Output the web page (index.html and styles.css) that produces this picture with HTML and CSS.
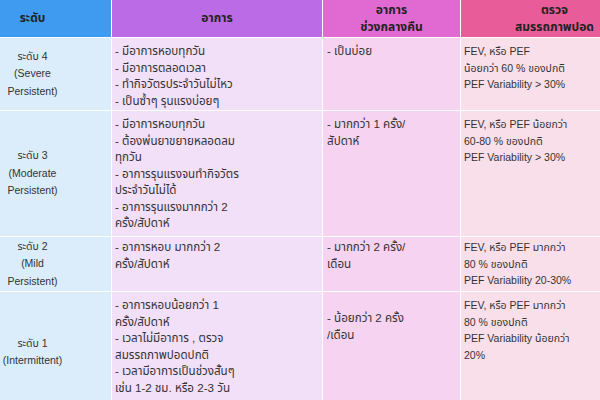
FILE: index.html
```html
<!DOCTYPE html>
<html lang="th">
<head>
<meta charset="utf-8">
<title>ระดับความรุนแรงของโรคหืด</title>
<link rel="stylesheet" href="styles.css">
</head>
<body>
<div class="table">
  <div class="cell head c1"><div class="ln">ระดับ</div></div>
  <div class="cell head c2"><div class="ln">อาการ</div></div>
  <div class="cell head c3"><div class="ln">อาการ</div><div class="ln">ช่วงกลางคืน</div></div>
  <div class="cell head c4"><div class="ln">ตรวจ</div><div class="ln">สมรรถภาพปอด</div></div>

  <div class="cell lv c1"><div class="ln">ระดับ 4</div><div class="ln">(Severe</div><div class="ln">Persistent)</div></div>
  <div class="cell c2"><div class="ln">- มีอาการหอบทุกวัน</div><div class="ln">- มีอาการตลอดเวลา</div><div class="ln">- ทำกิจวัตรประจำวันไม่ไหว</div><div class="ln">- เป็นซ้ำๆ รุนแรงบ่อยๆ</div></div>
  <div class="cell c3"><div class="ln">- เป็นบ่อย</div></div>
  <div class="cell c4"><div class="ln">FEV, หรือ PEF</div><div class="ln">น้อยกว่า 60 % ของปกติ</div><div class="ln">PEF Variability &gt; 30%</div></div>

  <div class="cell lv c1"><div class="ln">ระดับ 3</div><div class="ln">(Moderate</div><div class="ln">Persistent)</div></div>
  <div class="cell c2"><div class="ln">- มีอาการหอบทุกวัน</div><div class="ln">- ต้องพ่นยาขยายหลอดลม</div><div class="ln">ทุกวัน</div><div class="ln">- อาการรุนแรงจนทำกิจวัตร</div><div class="ln">ประจำวันไม่ได้</div><div class="ln">- อาการรุนแรงมากกว่า 2</div><div class="ln">ครั้ง/สัปดาห์</div></div>
  <div class="cell c3"><div class="ln">- มากกว่า 1 ครั้ง/</div><div class="ln">สัปดาห์</div></div>
  <div class="cell c4"><div class="ln">FEV, หรือ PEF น้อยกว่า</div><div class="ln">60-80 % ของปกติ</div><div class="ln">PEF Variability &gt; 30%</div></div>

  <div class="cell lv c1"><div class="ln">ระดับ 2</div><div class="ln">(Mild</div><div class="ln">Persistent)</div></div>
  <div class="cell c2 tight"><div class="ln">- อาการหอบ มากกว่า 2</div><div class="ln">ครั้ง/สัปดาห์</div></div>
  <div class="cell c3 tight"><div class="ln">- มากกว่า 2 ครั้ง/</div><div class="ln">เดือน</div></div>
  <div class="cell c4 tight"><div class="ln">FEV, หรือ PEF มากกว่า</div><div class="ln">80 % ของปกติ</div><div class="ln">PEF Variability 20-30%</div></div>

  <div class="cell lv c1"><div class="ln">ระดับ 1</div><div class="ln">(Intermittent)</div></div>
  <div class="cell c2"><div class="ln">- อาการหอบน้อยกว่า 1</div><div class="ln">ครั้ง/สัปดาห์</div><div class="ln">- เวลาไม่มีอาการ , ตรวจ</div><div class="ln">สมรรถภาพปอดปกติ</div><div class="ln">- เวลามีอาการเป็นช่วงสั้นๆ</div><div class="ln">เช่น 1-2 ชม. หรือ 2-3 วัน</div></div>
  <div class="cell c3 late"><div class="ln">- น้อยกว่า 2 ครั้ง</div><div class="ln">/เดือน</div></div>
  <div class="cell c4"><div class="ln">FEV, หรือ PEF มากกว่า</div><div class="ln">80 % ของปกติ</div><div class="ln">PEF Variability น้อยกว่า</div><div class="ln">20%</div></div>
</div>
</body>
</html>
```

FILE: styles.css
```css
html, body {
  margin: 0;
  padding: 0;
  background: #ffffff;
}
body {
  width: 600px;
  height: 400px;
  overflow: hidden;
  font-family: "Liberation Sans", "Noto Sans Thai", "Noto Sans Thai Looped", "Noto Sans", "DejaVu Sans", sans-serif;
  font-size: 10.5px;
  color: #333333;
}
.table {
  display: grid;
  grid-template-columns: 111px 210px 137px 139px;
  grid-template-rows: 37px 72px 125px 54px 120px;
  gap: 1px;
  background: #ffffff;
  width: 600px;
}
.cell {
  padding: 5px 4px 0 3px;
  line-height: 16.5px;
  overflow: hidden;
}
.c2, .c3 {
  font-size: 11.6px;
}
.c3 {
  padding-left: 4px;
}
.tight {
  padding-top: 2px;
}
.ln {
  white-space: nowrap;
}
.head {
  display: flex;
  flex-direction: column;
  justify-content: center;
  align-items: center;
  padding: 0;
  font-weight: bold;
  font-size: 12px;
  color: #222222;
  line-height: 17px;
}
.head.c1 { background: #3f9bf0; padding-right: 46px; }
.head.c2 { background: #bb6be6; }
.head.c3 { background: #e06ad2; padding: 0; }
.head.c4 { background: #e85d99; padding-left: 48px; }

.c1 { background: #dbedfb; }
.c2 { background: #f2dff8; }
.c3 { background: #f6d4f1; }
.c4 { background: #f9dfea; }

.lv {
  display: flex;
  flex-direction: column;
  justify-content: center;
  align-items: center;
  padding: 0 46px 0 0;
  line-height: 17.5px;
}
.late {
  padding-top: 18px;
}
```
